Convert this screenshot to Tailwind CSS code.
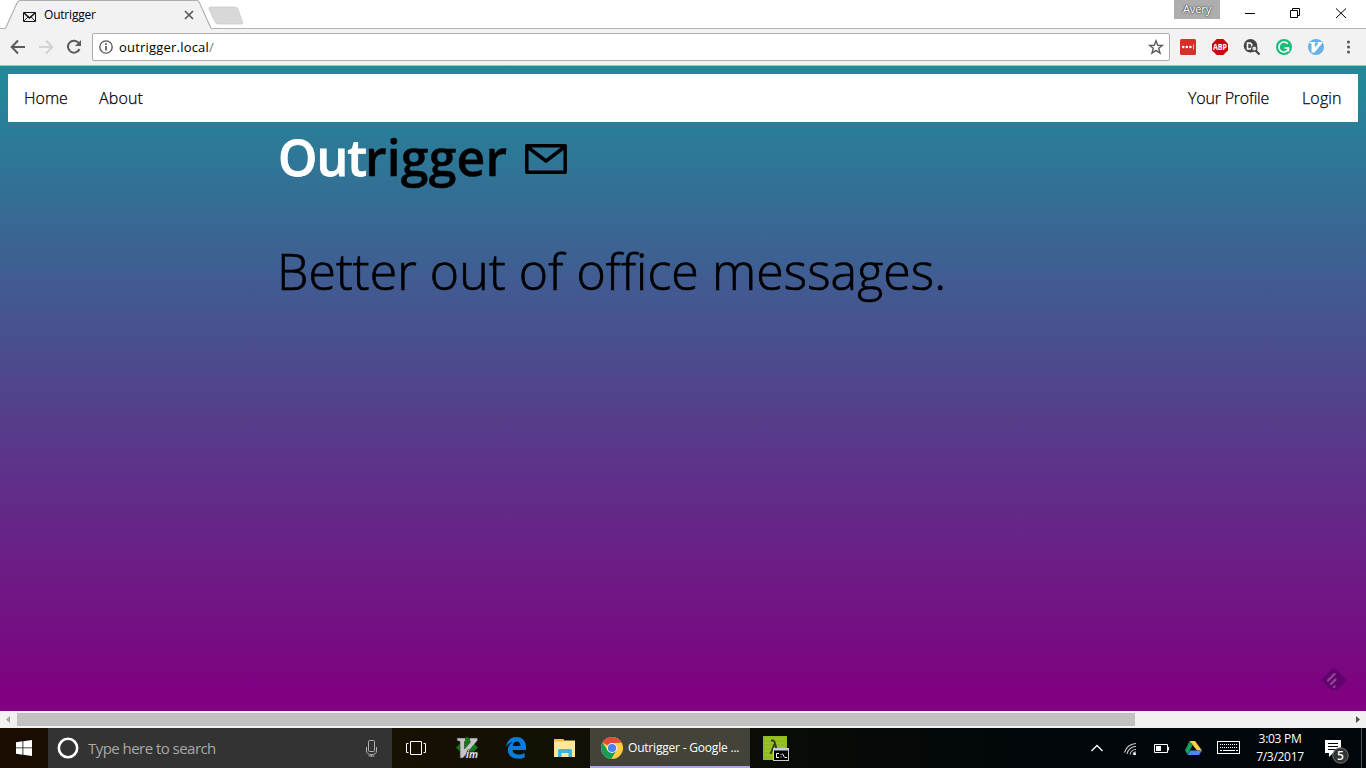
<!DOCTYPE html>
<html lang="en">
<head>
<meta charset="utf-8">
<title>Outrigger</title>
<script src="https://cdn.jsdelivr.net/npm/@tailwindcss/browser@4"></script>
</head>
<body class="w-[1366px] h-[768px] overflow-hidden flex flex-col bg-white text-black font-['Open_Sans','Noto_Sans',sans-serif]">

<!-- Tab strip -->
<header class="relative h-[29px] shrink-0 flex">
  <svg class="absolute inset-0" width="1366" height="29" viewBox="0 0 1366 29">
    <path d="M0 28.500H5.500L17 3Q18.300 .5 20 .5H197Q198.500 .5 199.500 3L211 28.500H1366" fill="none" stroke="#b4b4b4"/>
    <path d="M5.500 29L17.300 3Q18.500 1 20 1H197Q198.300 1 199.200 3L211 29Z" fill="#f2f2f2"/>
    <path d="M5.500 28.500L17 3Q18.200 .5 20 .5H197Q198.500 .5 199.500 3L211 28.500" fill="none" stroke="#adadad"/>
    <path d="M210 7H235Q237 7 238 9L242.500 22Q243 24 242 24H218Q216 24 215 22L209 9Q208.500 7 210 7Z" fill="#d8d8d8" stroke="#c9c9c9" stroke-width=".7"/>
  </svg>
  <div class="relative w-[211px] h-[29px] flex items-center pl-[23px] pt-px">
    <svg class="mt-[3px]" width="13" height="10" viewBox="0 0 13 10" fill="none" stroke="#111"><path d="M.5 .5H12.500V9.500H.5Z"/><path d="M1 1L6.500 6L12 1" stroke-width="1.600"/><path d="M1 9L5 4.800M12 9L8 4.800" stroke-width=".9"/></svg>
    <span class="ml-2 text-[12px] leading-4 tracking-[-0.200px]">Outrigger</span>
    <svg class="absolute left-[184px] top-[10px]" width="10" height="10" viewBox="0 0 10 10"><path d="M1 1L9 9M9 1L1 9" stroke="#5a5a5a" stroke-width="1.700"/></svg>
  </div>
  <div class="absolute right-0 top-0 flex">
    <div class="w-[46px] h-[19px] bg-[#adadad] text-white text-[11px] leading-[18px] text-center tracking-[-0.100px] [text-shadow:0_0_2px_#222,0_0_1px_#555]">Avery</div>
    <svg width="146" height="28" viewBox="0 0 146 28" fill="none" stroke="#000"><path d="M25 13.500H35M70.500 10.500H77.500V17.500H70.500ZM72.500 10.500V8.500H79.500V15.500H77.500M116 8.500L126 18M126 8.500L116 18"/></svg>
  </div>
</header>

<!-- Address bar -->
<div class="h-[37px] shrink-0 bg-[#f2f2f2] border-b border-[#b8b8b8] flex items-center">
  <svg class="shrink-0" width="92" height="36" viewBox="0 0 92 36" fill="none" stroke="#5a5a5a" stroke-width="2">
    <path d="M25 18H12M18 11.500L11.700 18L18 24.500"/>
    <path d="M39 18H52M46 11.500L52.300 18L46 24.500" stroke="#d2d2d2"/>
    <path d="M78.700 14A6 6 0 1 0 79.500 20"/><path d="M81 11V17H75Z" fill="#5a5a5a" stroke="none"/>
  </svg>
  <div class="w-[1078px] h-[28px] shrink-0 bg-white border border-[#acacac] rounded-[2px] flex items-center pl-[6px] pr-[5px]">
    <svg width="14" height="14" viewBox="0 0 14 14" fill="none" stroke="#555"><circle cx="7" cy="7" r="6.200" stroke-width="1.300"/><path d="M7 6V10.500M7 3.300V5" stroke-width="1.700"/></svg>
    <span class="ml-[6px] text-[13px] leading-5 grow tracking-[0.200px]">outrigger.local<span class="text-[#777]">/</span></span>
    <svg width="16" height="16" viewBox="0 0 16 16" fill="none" stroke="#5a5a5a" stroke-width="1.400"><path d="M8 1.800L9.700 6.300L14.300 6.500L10.700 9.300L12 14L8 11.300L4 14L5.300 9.300L1.700 6.500L6.300 6.300Z"/></svg>
  </div>
  <svg class="shrink-0" width="196" height="36" viewBox="0 0 196 36">
    <rect x="10" y="10" width="16" height="16" rx="1.500" fill="#d5302a"/><g fill="#fff"><circle cx="13.200" cy="18" r="1.300"/><circle cx="16.800" cy="18" r="1.300"/><circle cx="20.400" cy="18" r="1.300"/><rect x="23" y="15.500" width="1" height="5" opacity=".7"/></g>
    <path d="M46.700 10H53.300L58 14.700V21.300L53.300 26H46.700L42 21.300V14.700Z" fill="#c90a0c"/><text x="50" y="21" text-anchor="middle" font-size="8" font-weight="700" fill="#fff" textLength="14" lengthAdjust="spacingAndGlyphs" font-family="Open Sans">ABP</text>
    <circle cx="80.500" cy="16.800" r="6.800" fill="#444"/><path d="M85 21L89.500 25.500" stroke="#444" stroke-width="2.200"/><path d="M77.500 14H79A3 3 0 0 1 79 20H77.500Z" fill="none" stroke="#fff" stroke-width="1.600"/><circle cx="84.300" cy="19.500" r="2.600" fill="#ddd" stroke="#444" stroke-width="1.200"/>
    <circle cx="114" cy="18" r="8" fill="#1bbb78"/><path d="M117.800 14.800A5 5 0 1 0 118.300 20.500M114.500 19H118.500V22.500" fill="none" stroke="#fff" stroke-width="1.600"/>
    <circle cx="146" cy="18" r="8" fill="#65b1e8"/><path d="M140 13H145.500V14.500H144.800V18.500L148.500 14.500H147.500V13H152V14.500L144.500 23.500H141.500V14.500H140Z" fill="#fff"/>
    <g fill="#555"><circle cx="178.500" cy="13" r="1.500"/><circle cx="178.500" cy="18" r="1.500"/><circle cx="178.500" cy="23" r="1.500"/></g>
  </svg>
</div>

<!-- Page -->
<main class="relative h-[645px] shrink-0 px-2 pt-2 bg-[linear-gradient(#208b9a_0px,#800080_630px)]">
  <nav class="h-[48px] bg-white px-4 flex items-center text-[16px] font-light [-webkit-text-stroke:0.250px_#000]">
    <a class="w-[75px]">Home</a><a class="tracking-[0.150px]">About</a>
    <a class="ml-auto w-[114px] whitespace-nowrap tracking-[-0.200px]">Your Profile</a><a class="w-[40px] tracking-[0.150px]">Login</a>
  </nav>
  <section class="pl-[270px]">
    <h1 class="h-[72px] flex items-center text-[50px] leading-[70px] font-semibold"><span class="w-[87px] pb-[2px] text-white [-webkit-text-stroke:0.800px_#fff] tracking-[-0.900px]">Out</span><span class="w-[160px] pb-[2px] [-webkit-text-stroke:0.400px_#000] tracking-[0.150px]">rigger</span>
      <svg class="mt-px" width="42" height="30" viewBox="0 0 42 30" fill="none" stroke="#000" stroke-width="3.500" stroke-linejoin="round"><path d="M1.800 1.800H40.200V28.200H1.800ZM2.500 3L21 17L39.500 3"/></svg>
    </h1>
    <p class="mt-[42px] h-[72px] -ml-px text-[50px] leading-[71px] font-light whitespace-nowrap tracking-[0.100px] [-webkit-text-stroke:0.700px_#000]">Better out of office messages.</p>
  </section>
  <svg class="absolute right-[20px] bottom-[19px]" width="24" height="24" viewBox="0 0 24 24"><path d="M10 1.500Q12 0 14 1.500L23 10Q24.500 12 23 14L16 21Q15 22 13 22H11Q9 22 8 21L1 14Q-.5 12 1 10Z" fill="#590466" opacity=".8"/><path d="M6 12.500L12.500 6M9 16L13.500 11.500M12 19L12.500 18.500" stroke="#96409a" stroke-width="2.400" stroke-linecap="round"/></svg>
</main>

<!-- Horizontal scrollbar -->
<div class="h-[17px] shrink-0 bg-[#f1f1f1] flex items-center">
  <svg width="17" height="17" viewBox="0 0 17 17"><path d="M10 5V12L6 8.500Z" fill="#a3a3a3"/></svg>
  <div class="w-[1118px] h-[13px] bg-[#c1c1c1]"></div>
  <svg class="ml-auto" width="17" height="17" viewBox="0 0 17 17"><path d="M7 5V12L11 8.500Z" fill="#505050"/></svg>
</div>

<!-- Taskbar -->
<footer class="h-[40px] shrink-0 flex text-white bg-[linear-gradient(90deg,#1a0c00_0px,#171003_390px,#101004_600px,#070a07_850px,#00060a_1050px)]">
  <div class="w-12 flex items-center justify-center"><svg width="16" height="16" viewBox="0 0 16 16" fill="#fff"><path d="M0 2.300L6.500 1.300V7.500H0ZM7.300 1.200L16 0V7.500H7.300ZM0 8.300H6.500V14.700L0 13.700ZM7.300 8.300H16V16L7.300 14.800Z"/></svg></div>
  <div class="w-[344px] bg-[#333] flex items-center pl-[9px] pr-[14px]">
    <svg width="22" height="22" viewBox="0 0 22 22"><circle cx="11" cy="11" r="9.200" fill="none" stroke="#fff" stroke-width="2.600"/></svg>
    <span class="ml-[9px] text-[15px] text-[#a8a8a8] grow tracking-[-0.540px]">Type here to search</span>
    <svg width="13" height="17" viewBox="0 0 13 17" fill="none" stroke="#b0b0b0"><rect x="3.500" y=".5" width="6" height="11" rx="1"/><path d="M1.500 7V11Q1.500 14.500 6.500 14.500T11.500 11V7M6.500 14.500V16.500M3.500 16H9.500"/></svg>
  </div>
  <div class="w-[198px] flex items-center">
    <svg width="198" height="40" viewBox="0 0 198 40">
      <path d="M18.500 13.500H29.500V26.500H18.500ZM16.500 15.500H14.500V24.500H16.500M31.500 15.500H33.500V24.500H31.500" fill="none" stroke="#fff"/>
      <path d="M75 8.500L86 19.500L75 30.500L64 19.500Z" fill="#0c7e18"/><path d="M65 10H73.500V12.500L72.500 13.500V21L78.500 14L77.500 12V10H85.500V12.500L71 30H68V13.500L65 12.500Z" fill="#c5c5c5" stroke="#333" stroke-width=".6"/><text x="74" y="30" font-family="Open Sans" font-size="10" font-weight="700" font-style="italic" fill="#ddd" stroke="#222" stroke-width="1.200" paint-order="stroke" textLength="12" lengthAdjust="spacingAndGlyphs">im</text>
      <path d="M114 18.500C115 12.500 119 9 124.500 9C131 9 134 13.500 134 19V22H120.500C121 25.500 124 26.600 127 26.600C129.500 26.600 131.500 25.800 132.700 25V29.200C131 30.200 128.500 30.800 126 30.800C119.500 30.800 115.800 27 115.800 21.800C115.800 18 118.500 15.300 121 14C119 14.300 116 15.800 114 18.500ZM120.800 18H128.500C128.500 15.500 127 13.500 124.800 13.500C122.500 13.500 121.100 15.500 120.800 18Z" fill="#0a7bd8"/>
      <path d="M162 12V11H171L172.500 12.500H183V29H162Z" fill="#ffe08a"/><path d="M162 11H171L173 14H162Z" fill="#f4bf40"/><path d="M162.500 13.500H183V29H162.500Z" fill="#fee799"/><path d="M166 29V22.500Q166 21 167.500 21H178.500Q180 21 180 22.500V29H176.500V25H169.500V29Z" fill="#39b5ea"/>
    </svg>
  </div>
  <div class="w-[160px] bg-[#43433a] border-b-2 border-[#a9a8ee] flex items-center pl-[11px]">
    <svg class="shrink-0 mt-[2px]" width="22" height="22" viewBox="0 0 22 22"><circle cx="11" cy="11" r="11" fill="#ffcd42"/><path d="M11 11L1.500 5.500A11 11 0 0 1 20.600 5.800L11 6Z" fill="#e34a3d"/><path d="M1.500 5.500A11 11 0 0 0 10.300 22L15.300 13.500L6.600 13.400Z" fill="#1b9b58"/><circle cx="11" cy="11" r="5.100" fill="#f3f3f3"/><circle cx="11" cy="11" r="4.100" fill="#4a83ed"/></svg>
    <span class="ml-[5px] mt-[2px] text-[12px] whitespace-nowrap tracking-[-0.200px]">Outrigger - Google ...</span>
  </div>
  <svg width="50" height="40" viewBox="0 0 50 40"><rect x="13" y="8" width="24" height="24" fill="#91bb20"/><path d="M15 11H35M15 15H35M15 19H35M15 23H35M15 27H35" stroke="#a3cb34"/><path d="M21 12.500H23Q24 12.500 24.500 14L28 26M24.500 16L20.500 26" stroke="#36401a" stroke-width="2" fill="none"/><rect x="23.500" y="20.500" width="15" height="12" fill="#000" stroke="#c6ccd6"/><path d="M24 21.500H38" stroke="#c6ccd6" stroke-width="2"/><path d="M29 25.500H26.500V29.500H29M31 26V27M31 28.500V29.500M32.500 25.500L34.500 29.500M35 29.500H37" stroke="#fff" fill="none"/></svg>
  <div class="ml-auto flex items-center">
    <svg width="170" height="40" viewBox="0 0 170 40">
      <path d="M21.500 23L27 17.500L32.500 23" fill="none" stroke="#fff" stroke-width="1.300"/>
      <g fill="none" stroke="#ccc" stroke-width="1.100"><path d="M54.500 24.500A12 12 0 0 1 66 15.500M57 26A9 9 0 0 1 66 18.500M60 26.500A6 6 0 0 1 66 21.500"/><path d="M63 26.500A3 3 0 0 1 66 24"/></g><circle cx="64.700" cy="26" r="1.300" fill="#fff"/>
      <path d="M84.500 16.500H97.500V24.500H84.500ZM98.500 19V22.500" fill="none" stroke="#fff"/><rect x="86" y="18" width="5" height="5" fill="#fff"/>
      <g transform="translate(-1 0)"><path d="M120.500 13H126L133 22.500H128Z" fill="#ffcf48"/><path d="M120.500 13L123.500 17.500L118.500 26.500L116 22.500Z" fill="#15a05d"/><path d="M121 22.500H133L130 27H118.500Z" fill="#4688f4"/></g>
      <rect x="147.500" y="13.500" width="22" height="12" fill="none" stroke="#fff"/><path d="M150 16.500H168M150 19.500H168" stroke="#fff" stroke-dasharray="1 1"/><path d="M150 22.500H168" stroke="#fff" stroke-dasharray="2 1 12 1 2 1"/>
    </svg>
    <div class="w-[82px] pr-[2px] text-center text-[12px] leading-[18px] tracking-[-0.300px] -mt-px">3:03 PM<br>7/3/2017</div>
    <svg width="44" height="40" viewBox="0 0 44 40"><path d="M3 12H19V25H11L7 29V25H3Z" fill="#fff"/><path d="M6 15.500H16M6 18.500H16M6 21.500H14" stroke="#000"/><circle cx="18.500" cy="27.500" r="7.700" fill="#333" stroke="#777"/><text x="18.500" y="31.500" text-anchor="middle" fill="#fff" font-size="12" font-weight="600" font-family="Open Sans">5</text><path d="M39.500 0V40" stroke="#555"/></svg>
  </div>
</footer>
</body>
</html>
